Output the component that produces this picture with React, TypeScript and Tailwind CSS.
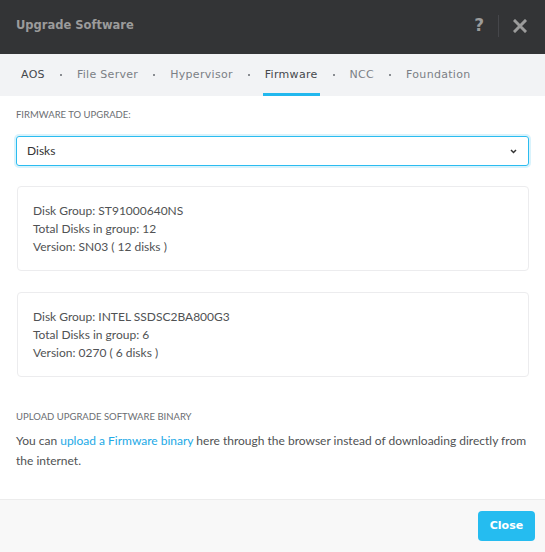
const tabs = ["AOS", "File Server", "Hypervisor", "Firmware", "NCC", "Foundation"];

const groups = [
  { name: "ST91000640NS", total: 12, version: "SN03 ( 12 disks )" },
  { name: "INTEL SSDSC2BA800G3", total: 6, version: "0270 ( 6 disks )" },
];

export default function App() {
  return (
    <div className="flex h-[552px] w-[545px] flex-col bg-white font-['Lato',sans-serif] text-[#4a4a4a]">
      {/* header */}
      <div className="flex h-[54px] shrink-0 items-center bg-[#333436] pb-[3px] pl-4 pr-[18px]">
        <h1 className="flex-1 font-['DejaVu_Sans',sans-serif] text-[11.5px] font-bold text-[#9b9b9b]">
          Upgrade Software
        </h1>
        <span className="font-['DejaVu_Sans',sans-serif] text-[17px] font-bold leading-none text-[#9b9b9b]">
          ?
        </span>
        <div className="mx-[14px] h-[22px] w-px bg-[#45464a]" />
        <svg width="14" height="14" viewBox="0 0 14 14" className="text-[#9b9b9b]">
          <path d="M2 2 L12 12 M12 2 L2 12" stroke="currentColor" strokeWidth="3" strokeLinecap="square" />
        </svg>
      </div>

      {/* tabs */}
      <div className="flex h-[42px] shrink-0 items-center gap-[15px] bg-[#f2f3f5] pl-[21px] font-['DejaVu_Sans',sans-serif] text-[11px] tracking-[0.3px]">
        {tabs.map((t, i) => (
          <div key={t} className="flex items-center gap-[15px]">
            {i > 0 && <span className="h-[2px] w-[2px] bg-[#8a8d92]" />}
            <span
              className={
                t === "Firmware"
                  ? "relative flex h-[42px] items-center text-[#45484c]"
                  : t === "AOS"
                  ? "text-[#45484c]"
                  : "text-[#7b7f85]"
              }
            >
              {t}
              {t === "Firmware" && (
                <span className="absolute -left-[2px] -right-[2px] bottom-0 h-[3px] bg-[#22b8ee]" />
              )}
            </span>
          </div>
        ))}
      </div>

      {/* body */}
      <div className="flex flex-1 flex-col px-4 pt-3">
        <div className="text-[9.5px] leading-[14px] text-[#6b6e72]">FIRMWARE TO UPGRADE:</div>
        <div className="mt-[14px] flex h-[30px] items-center justify-between rounded-[3px] border border-[#2bbcf0] pl-[10px] pr-[11px] text-[12px] text-[#333] shadow-[0_0_0_2px_rgba(43,188,240,0.18)]">
          <span>Disks</span>
          <svg width="7" height="5" viewBox="0 0 7 5">
            <path d="M1 1 L3.5 3.5 L6 1" fill="none" stroke="#333" strokeWidth="1.5" />
          </svg>
        </div>

        <div className="mt-5 flex flex-col gap-[21px]">
          {groups.map((g) => (
            <div
              key={g.name}
              className="ml-px flex h-[85px] flex-col justify-center rounded-[4px] border border-[#ececee] px-[15px] text-[12px] leading-[18px] text-[#505254]"
            >
              <div>Disk Group: {g.name}</div>
              <div>Total Disks in group: {g.total}</div>
              <div>Version: {g.version}</div>
            </div>
          ))}
        </div>

        <div className="mt-[33px] text-[9.5px] leading-[14px] text-[#6b6e72]">UPLOAD UPGRADE SOFTWARE BINARY</div>
        <p className="mt-[7px] text-[12px] leading-[20px] text-[#505254]">
          You can <a className="text-[#22a9e6]">upload a Firmware binary</a> here through the browser instead
          of downloading directly from the internet.
        </p>
      </div>

      {/* footer */}
      <div className="flex h-[53px] shrink-0 items-center justify-end border-t border-[#ececec] bg-[#f8f8f8] pr-[10px]">
        <button className="h-[30px] w-[57px] rounded-[4px] bg-[#25bcf0] font-['DejaVu_Sans',sans-serif] text-[11px] font-bold text-white">
          Close
        </button>
      </div>
    </div>
  );
}
